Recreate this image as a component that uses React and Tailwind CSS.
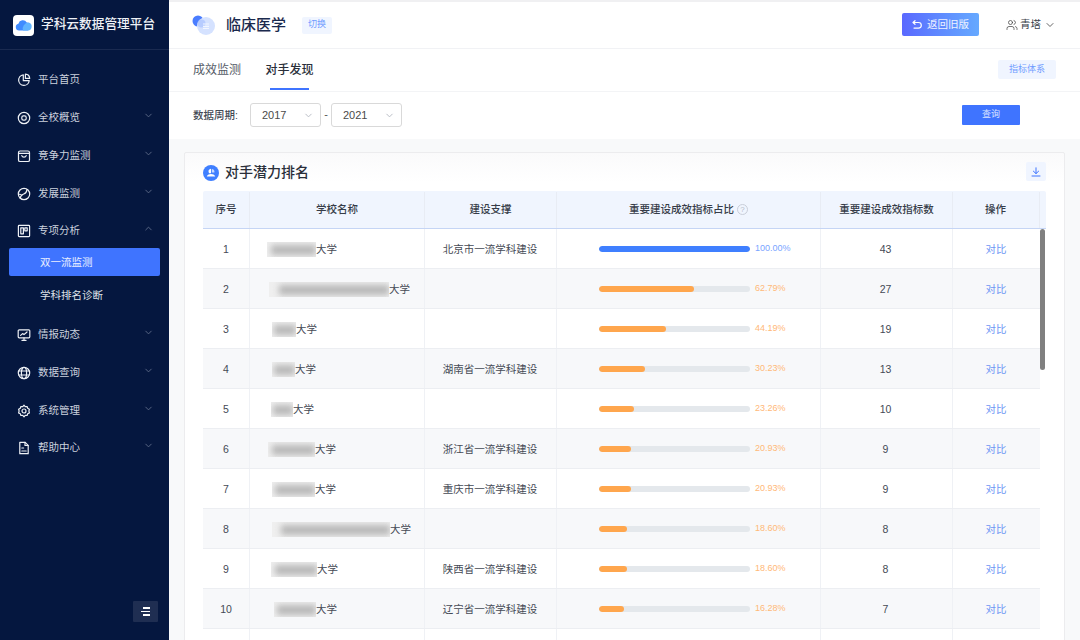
import React from "react";
import { ChevronDown, ChevronUp, Users } from "lucide-react";

const font = { fontFamily: '"Liberation Sans","Noto Sans CJK SC",sans-serif' };

const I = ({ children }) => (
  <svg width="14" height="14" viewBox="0 0 14 14" fill="none" stroke="#eef1f6" strokeWidth="1.2" strokeLinecap="round" strokeLinejoin="round">{children}</svg>
);
const icons = {
  pie: <I><path d="M6.3 1.8a5.3 5.3 0 1 0 5.9 5.9H6.3z" /><path d="M8.4 1.2v4.2h4.3a4.6 4.6 0 0 0-4.3-4.2z" /></I>,
  target: <I><circle cx="7" cy="7" r="5.7" /><rect x="4.8" y="4.8" width="4.4" height="4.4" rx="1.6" /></I>,
  bag: <I><rect x="1.5" y="2" width="11" height="10.5" rx="1.6" /><path d="M1.5 4.4h11M4.8 6.6c.5 2 3.9 2 4.4 0" /></I>,
  gauge: <I><circle cx="7" cy="7" r="5.7" /><path d="M3.3 11.2c.3-2.8 1.6-3.6 3.4-4.2s2.9-1.6 3.3-4.4" /><path d="M1.6 7.5c1.6-.6 2.6-.1 3.2 1" /></I>,
  board: <I><rect x="1.4" y="1.4" width="11.2" height="11.2" rx="0.8" /><path d="M3.8 3.8h2.6v6H3.8zM7.8 3.8h2.4v3H7.8z" /></I>,
  monitor: <I><rect x="1.2" y="1.8" width="11.6" height="8" rx="1" /><path d="M3.6 7.4l2-1.8 1.4 1 3-2.6M5 12.4h4M7 9.8v2.6" /></I>,
  globe: <I><circle cx="7" cy="7" r="5.7" /><ellipse cx="7" cy="7" rx="2.6" ry="5.7" /><path d="M1.8 5h10.4M1.8 9h10.4" /></I>,
  gear: <I><path d="M7 1.2l1.2 1.4 1.9-.1.6 1.8 1.7.9-.5 1.8.5 1.9-1.7.8-.6 1.8-1.9-.1L7 12.8l-1.2-1.4-1.9.1-.6-1.8-1.7-.8.5-1.9-.5-1.8 1.7-.9.6-1.8 1.9.1z" /><circle cx="7" cy="7" r="2" /></I>,
  file: <I><path d="M2.8 1.3h5.4l3 3v8.4H2.8z" /><path d="M8 1.3v3.2h3.2M4.8 7h1.8M4.8 10h4.4" /></I>,
};

const menu = [
  { t: "平台首页", i: "pie", c: 0, h: "h-[38px]" },
  { t: "全校概览", i: "target", c: 1, h: "h-[38px]" },
  { t: "竞争力监测", i: "bag", c: 1, h: "h-[38px]" },
  { t: "发展监测", i: "gauge", c: 1, h: "h-[37px]" },
  { t: "专项分析", i: "board", c: 2, h: "h-[38px]" },
];
const menu2 = [
  { t: "情报动态", i: "monitor", c: 1, h: "h-[38px]" },
  { t: "数据查询", i: "globe", c: 1, h: "h-[38px]" },
  { t: "系统管理", i: "gear", c: 1, h: "h-[38px]" },
  { t: "帮助中心", i: "file", c: 1, h: "h-[36px]" },
];

function MenuItem({ m }) {
  return (
    <div className={`${m.h} flex items-center pt-[2px] pl-[17px] pr-[15px] text-[10.5px] text-[#ccd2de]`}>
      <span className="w-[14px] h-[14px] flex mr-[7px]">{icons[m.i]}</span>
      <span className="flex-1">{m.t}</span>
      {m.c === 2 && <ChevronUp size={11} color="#5d6a88" className="-mt-[5px]" />}
      {m.c === 1 && <ChevronDown size={11} color="#5d6a88" className="-mt-[5px]" />}
    </div>
  );
}

function Sidebar() {
  return (
    <aside className="w-[169px] shrink-0 bg-[#05173f] flex flex-col h-[640px]">
      <div className="h-[49px] mt-px flex items-center pl-[13px] border-b border-[#1a2a50] shrink-0">
        <div className="w-[21px] h-[21px] bg-white rounded-[4px] flex items-center justify-center">
          <svg width="17" height="12" viewBox="0 0 17 12">
            <path d="M4 11.5a3.4 3.4 0 0 1-.6-6.7A4.6 4.6 0 0 1 11.8 3.5a4.1 4.1 0 0 1 1 8z" fill="#3f8bff" />
            <path d="M8 11.5h5a4 4 0 0 0 .5-7.9A6 6 0 0 0 8 11.5z" fill="#60b4ff" />
          </svg>
        </div>
        <span className="ml-[7px] text-[12.7px] text-[#eef1f6] font-medium whitespace-nowrap">学科云数据管理平台</span>
      </div>
      <div className="pt-[10px] flex flex-col">
        {menu.map((m) => <MenuItem key={m.t} m={m} />)}
        <div className="mx-[9px] mt-[-1px] h-[28px] pt-[2px] rounded-[2px] bg-[#3f74ff] text-white/90 text-[10.5px] flex items-center pl-[31px]">双一流监测</div>
        <div className="h-[39px] pl-[40px] pt-[1px] text-[10.5px] text-[#dfe3ea] flex items-center">学科排名诊断</div>
        {menu2.map((m) => <MenuItem key={m.t} m={m} />)}
      </div>
      <div className="mt-auto mb-[18px] self-end mr-[11px] w-[25px] h-[21px] bg-[#1f2e52] rounded-[1px] flex flex-col items-center justify-center gap-[2px]">
        <span className="w-[7px] h-[1.5px] bg-white ml-[1px]" />
        <span className="w-[9px] h-[1.5px] bg-white" />
        <span className="w-[7px] h-[1.5px] bg-white ml-[1px]" />
      </div>
    </aside>
  );
}

function Header() {
  return (
    <div className="h-[47px] bg-white border-b border-[#f1f2f5] flex items-center pl-[23px] pr-[24px] shrink-0">
      <svg width="24" height="20" viewBox="0 0 24 20" className="-mt-[1px]">
        <circle cx="6" cy="6" r="5.5" fill="#4a7dff" />
        <circle cx="14" cy="11" r="9" fill="#d5e2ff" />
        <circle cx="9.5" cy="8.5" r="4" fill="#a9c3ff" opacity="0.7" />
        <path d="M11 9h6M11 11.3h6M11 13.5h6" stroke="#f2f6ff" strokeWidth="1.2" />
      </svg>
      <span className="ml-[10px] text-[15px] font-medium text-[#1b2a4e]">临床医学</span>
      <span className="ml-[16px] w-[30px] h-[17px] rounded-[2px] bg-[#f0f5ff] text-[#6f9bff] text-[9px] flex items-center justify-center">切换</span>
      <div className="ml-auto w-[77px] h-[23px] -mt-[1px] rounded-[2px] bg-gradient-to-r from-[#5a68ff] to-[#66a9ff] flex items-center justify-center gap-[5px] text-white/90 text-[10.5px]">
        <svg width="10" height="9" viewBox="0 0 10 9" fill="none" stroke="#fff" strokeWidth="1.2" strokeLinecap="round" strokeLinejoin="round">
          <path d="M3 .7L1 2.5l2 1.8M1 2.5h5.5a2.4 2.4 0 0 1 0 5.6H2" />
        </svg>
        <span>返回旧版</span>
      </div>
      <div className="ml-[27px] flex items-center text-[10.5px] text-[#3a3f4a]">
        <Users size={12} color="#444" strokeWidth={1.5} />
        <span className="ml-[2px]">青塔</span>
        <ChevronDown size={12} color="#666" className="ml-[3px]" />
      </div>
    </div>
  );
}

function Tabs() {
  return (
    <div className="h-[43px] bg-white border-b border-[#f3f4f6] flex pl-[24px] pr-[24px] shrink-0">
      <span className="mt-[12px] text-[12px] text-[#555b66]">成效监测</span>
      <div className="ml-[25px] flex flex-col items-center w-[47px]">
        <span className="mt-[12px] text-[12px] font-medium text-[#2a2f3a] whitespace-nowrap">对手发现</span>
        <span className="mt-auto w-[39px] h-[2px] bg-[#3f74ff] mb-[1px]" />
      </div>
      <span className="ml-auto mt-[11px] w-[58px] h-[19px] rounded-[2px] bg-[#f0f5ff] text-[#6f9bff] text-[9px] flex items-center justify-center">指标体系</span>
    </div>
  );
}

function Sel({ y }) {
  return (
    <div className="w-[71px] h-[24px] pt-[2px] rounded-[3px] border border-[#d9d9d9] flex items-center pl-[11px] pr-[6px] text-[11px] text-[#4a4a4a]">
      <span className="flex-1">{y}</span>
      <ChevronDown size={11} color="#b5b9c2" />
    </div>
  );
}

function Filter() {
  return (
    <div className="h-[47px] pb-[2px] bg-white flex items-center pl-[24px] pr-[60px] shrink-0">
      <span className="text-[10.5px] font-medium text-[#444a55] w-[57px] pt-[2px]">数据周期:</span>
      <Sel y="2017" />
      <span className="w-[10px] text-center text-[11px] text-[#555]">-</span>
      <Sel y="2021" />
      <span className="ml-auto w-[58px] h-[20px] rounded-[1px] bg-[#3f74ff] text-white/80 text-[9px] flex items-center justify-center">查询</span>
    </div>
  );
}

const rows = [
  { n: 1, b: "ml-[17px] w-[49px]", s: "北京市一流学科建设", p: 100, c: 43 },
  { n: 2, b: "ml-[19px] w-[120px]", p: 62.79, c: 27 },
  { n: 3, b: "ml-[22px] w-[24px]", p: 44.19, c: 19 },
  { n: 4, b: "ml-[22px] w-[23px]", s: "湖南省一流学科建设", p: 30.23, c: 13 },
  { n: 5, b: "ml-[21px] w-[22px]", p: 23.26, c: 10 },
  { n: 6, b: "ml-[18px] w-[47px]", s: "浙江省一流学科建设", p: 20.93, c: 9 },
  { n: 7, b: "ml-[22px] w-[43px]", s: "重庆市一流学科建设", p: 20.93, c: 9 },
  { n: 8, b: "ml-[22px] w-[118px]", p: 18.6, c: 8 },
  { n: 9, b: "ml-[21px] w-[46px]", s: "陕西省一流学科建设", p: 18.6, c: 8 },
  { n: 10, b: "ml-[24px] w-[42px]", s: "辽宁省一流学科建设", p: 16.28, c: 7 },
];

const th = "flex items-center justify-center border-r border-[#e8ecf4] text-[10.5px] font-medium text-[#363c48]";
const cell = "flex items-center justify-center border-r border-[#eff1f5] text-[10.5px]";
const td = `${cell} text-[#454a55]`;

function Row({ r }) {
  const blue = r.p === 100;
  return (
    <div className={`h-[40px] flex border-b border-[#eceef2] shrink-0 ${r.n % 2 === 0 ? "bg-[#f7f8fa]" : "bg-white"}`}>
      <div className={`${td} w-[47px] pt-[2px]`}>{r.n}</div>
      <div className={`${td} w-[175px] pt-[2px] !justify-start`}>
        <span className={`${r.b} h-[15px] bg-[#efefef] overflow-hidden flex items-center justify-end`}>
          <span className="w-[92%] h-[10px] bg-[#b8b8b8] blur-[3px]" />
        </span>
        <span>大学</span>
      </div>
      <div className={`${td} w-[132px] pt-[2px] pr-[1px]`}>{r.s}</div>
      <div className={`${td} w-[264px] pt-[1px] !justify-start pl-[42px]`}>
        <div className="w-[151px] h-[6px] rounded-full bg-[#e4e8ec] overflow-hidden">
          <div className={`h-full rounded-full ${blue ? "bg-[#3f7fff]" : "bg-[#ffa64d]"}`} style={{ width: `${r.p}%` }} />
        </div>
        <span className={`ml-[5px] text-[9px] ${blue ? "text-[#7aa5ff]" : "text-[#ffb878]"}`}>{r.p === 100 ? "100.00" : r.p.toFixed(2)}%</span>
      </div>
      <div className={`${td} w-[132px] pt-[2px] pr-[2px]`}>{r.c}</div>
      <div className={`${cell} w-[87px] pt-[2px] pr-[1px] !border-r-0 text-[#6d97f5]`}>对比</div>
    </div>
  );
}

function Table() {
  return (
    <div className="mt-[4px] mx-[18px] flex flex-col">
      <div className="h-[38px] pt-[1px] flex bg-[#f0f5fe] border-b border-[#c5d5f5] shrink-0 rounded-t-[2px]">
        <div className={`${th} w-[47px]`}>序号</div>
        <div className={`${th} w-[175px]`}>学校名称</div>
        <div className={`${th} w-[132px]`}>建设支撑</div>
        <div className={`${th} w-[264px]`}>
          重要建设成效指标占比
          <span className="ml-[3px] -mt-[2px] w-[11px] h-[11px] rounded-full border border-[#c9ced9] text-[8px] leading-[10px] text-center text-[#b5bbc8] font-normal">?</span>
        </div>
        <div className={`${th} w-[132px]`}>重要建设成效指标数</div>
        <div className={`${th} w-[87px] pr-[1px]`}>操作</div>
      </div>
      <div className="flex">
        <div className="w-[837px] shrink-0 flex flex-col">
          {rows.map((r) => <Row key={r.n} r={r} />)}
          <div className="h-[40px] flex bg-white shrink-0">
            <div className={`${td} w-[47px]`} />
            <div className={`${td} w-[175px]`} />
            <div className={`${td} w-[132px]`} />
            <div className={`${td} w-[264px]`} />
            <div className={`${td} w-[132px]`} />
          </div>
        </div>
        <div className="w-[6px]">
          <div className="w-[5px] h-[141px] rounded-full bg-[#808080]" />
        </div>
      </div>
    </div>
  );
}

function Card() {
  return (
    <div className="mt-[13px] ml-[15px] w-[881px] border border-[#ececee] rounded-t-[2px] shrink-0 bg-gradient-to-b from-[#fafafb] to-white to-[30px]">
      <div className="h-[29px] mt-[5px] flex items-center pl-[18px] pr-[18px]">
        <span className="w-[16px] h-[16px] rounded-full bg-[#3f7fff] flex items-center justify-center">
          <svg width="10" height="10" viewBox="0 0 10 10" fill="#fff">
            <path d="M5 .8a2.6 2.6 0 0 0-1.8 4.4h1.8z" />
            <path d="M5.8 1v3.4h2.6A2.8 2.8 0 0 0 5.8 1z" opacity="0.7" />
            <path d="M.8 8.6c.8-1.8 2.3-2.5 4.2-2.5s3.4.7 4.2 2.5z" />
          </svg>
        </span>
        <span className="ml-[6px] text-[14px] font-medium text-[#2a2f3a]">对手潜力排名</span>
        <span className="ml-auto -mt-[2px] w-[20px] h-[19px] rounded-[2px] bg-[#f0f5ff] flex items-center justify-center">
          <svg width="10" height="10" viewBox="0 0 10 10" fill="none" stroke="#3f74ff" strokeWidth="1" strokeLinecap="round" strokeLinejoin="round">
            <path d="M5 .8v5.6M2.4 4.2L5 6.6l2.6-2.4M1 9h8" />
          </svg>
        </span>
      </div>
      <Table />
    </div>
  );
}

export default function App() {
  return (
    <div className="w-[1080px] h-[640px] overflow-hidden flex bg-[#f8f9fa]" style={font}>
      <Sidebar />
      <main className="flex-1 flex flex-col h-[640px] overflow-hidden">
        <div className="h-[2px] bg-[#f0f0f2] shrink-0" />
        <Header />
        <Tabs />
        <Filter />
        <Card />
      </main>
    </div>
  );
}
